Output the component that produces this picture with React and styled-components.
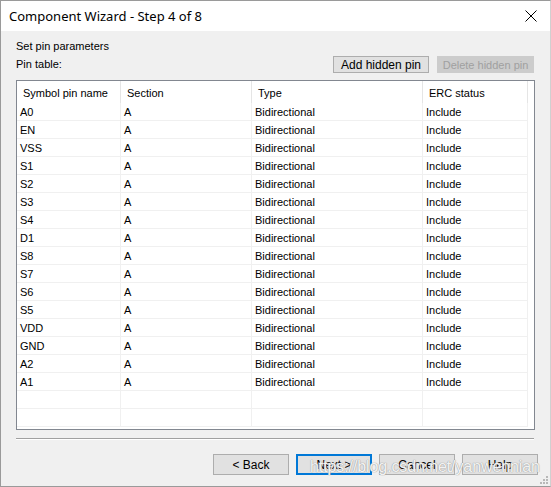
import React from 'react';
import styled, { createGlobalStyle } from 'styled-components';

const GlobalStyle = createGlobalStyle`
  html, body {
    margin: 0;
    padding: 0;
    background: #ffffff;
  }
  * {
    box-sizing: border-box;
  }
`;

const pins = ['A0', 'EN', 'VSS', 'S1', 'S2', 'S3', 'S4', 'D1', 'S8', 'S7', 'S6', 'S5', 'VDD', 'GND', 'A2', 'A1'];

const columns = [
  { label: 'Symbol pin name', width: 104 },
  { label: 'Section', width: 131 },
  { label: 'Type', width: 171 },
  { label: 'ERC status', width: 105 },
];

const Window = styled.div`
  position: relative;
  width: 551px;
  height: 487px;
  display: flex;
  flex-direction: column;
  border: 1px solid #9a9a9a;
  border-right-color: #d0d0d0;
  background: #f0f0f0;
  font-family: "Liberation Sans", Arial, sans-serif;
  font-size: 11px;
  color: #000;
  overflow: hidden;
`;

const TitleBar = styled.div`
  height: 30px;
  flex: none;
  display: flex;
  align-items: center;
  justify-content: space-between;
  padding: 0 13px 0 8px;
  background: #ffffff;
  font-family: "Noto Sans", "Open Sans", sans-serif;
  font-size: 13px;
`;

const Body = styled.div`
  flex: 1;
  display: flex;
  flex-direction: column;
  padding: 9px 15px 0 15px;
`;

const Label = styled.div`
  height: 13px;
  line-height: 13px;
`;

const ToolRow = styled.div`
  display: flex;
  align-items: center;
  justify-content: space-between;
  margin-top: 3px;
  padding-right: 1px;
`;

const ButtonGroup = styled.div`
  display: flex;
  gap: ${p => p.gap || 8}px;
`;

const Button = styled.button`
  width: ${p => p.w || 76}px;
  height: ${p => p.h || 21}px;
  padding: 0;
  border: ${p => p.focused ? '2px' : '1px'} solid;
  color: ${p => p.disabled ? '#a0a0a0' : '#000'};
  border-color: ${p => p.disabled ? '#cccccc' : p.focused ? '#0078d7' : '#adadad'};
  background: ${p => p.disabled ? '#cccccc' : '#e1e1e1'};
  font-family: "Liberation Sans", Arial, sans-serif;
  font-size: ${p => p.fs || 11}px;
  white-space: nowrap;
  cursor: default;
`;

const Table = styled.div`
  margin-top: 7px;
  height: 350px;
  border: 1px solid #828790;
  background: #ffffff;
  overflow: hidden;
`;

const Row = styled.div`
  display: flex;
  height: ${p => p.header ? 22 : 18}px;
  border-bottom: ${p => p.header ? 'none' : '1px solid #f0f0f0'};
  width: 511px;
`;

const Cell = styled.div`
  width: ${p => p.w}px;
  flex: none;
  display: flex;
  align-items: center;
  padding-left: ${p => p.header ? 6 : 3}px;
  padding-top: ${p => p.header ? 1 : 0}px;
  border-right: 1px solid ${p => p.header ? '#e5e5e5' : '#f0f0f0'};
  white-space: nowrap;
  overflow: hidden;
`;

const Divider = styled.div`
  margin-top: 8px;
  height: 2px;
  border-top: 1px solid #a0a0a0;
  border-bottom: 1px solid #ffffff;
  margin-right: 1px;
`;

const Footer = styled.div`
  display: flex;
  justify-content: flex-end;
  margin-top: 14px;
  margin-right: -3px;
`;

const Watermark = styled.div`
  position: absolute;
  left: 309px;
  top: 457px;
  font-family: "Liberation Sans", Arial, sans-serif;
  font-size: 16px;
  letter-spacing: -0.1px;
  color: rgba(255, 255, 255, 0.9);
  text-shadow: 0 0 1px #9a9a9a, 0 0 1px #9a9a9a;
  white-space: nowrap;
  pointer-events: none;
`;

const Grip = styled.svg`
  position: absolute;
  right: 1px;
  bottom: 1px;
`;

const CloseIcon = () => (
  <svg width="12" height="12" viewBox="0 0 12 12">
    <path d="M0.5 0.5 L11.5 11.5 M11.5 0.5 L0.5 11.5" stroke="#000" strokeWidth="1" fill="none" />
  </svg>
);

export default function App() {
  const rows = [...pins, '', ''];
  return (
    <>
      <GlobalStyle />
      <Window>
        <TitleBar>
          <span>Component Wizard - Step 4 of 8</span>
          <CloseIcon />
        </TitleBar>
        <Body>
          <Label>Set pin parameters</Label>
          <ToolRow>
            <Label>Pin table:</Label>
            <ButtonGroup gap={8}>
              <Button w={96} h={17} fs={12}>Add hidden pin</Button>
              <Button w={97} h={17} fs={11} disabled>Delete hidden pin</Button>
            </ButtonGroup>
          </ToolRow>
          <Table>
            <Row header>
              {columns.map(c => (
                <Cell header key={c.label} w={c.width}>{c.label}</Cell>
              ))}
            </Row>
            {rows.map((pin, i) => (
              <Row key={i}>
                <Cell w={columns[0].width}>{pin}</Cell>
                <Cell w={columns[1].width}>{pin ? 'A' : ''}</Cell>
                <Cell w={columns[2].width}>{pin ? 'Bidirectional' : ''}</Cell>
                <Cell w={columns[3].width}>{pin ? 'Include' : ''}</Cell>
              </Row>
            ))}
          </Table>
          <Divider />
          <Footer>
            <ButtonGroup gap={7}>
              <Button fs={12}>&lt; Back</Button>
              <Button fs={12} focused>Next &gt;</Button>
              <Button fs={12}>Cancel</Button>
              <Button fs={12}>Help</Button>
            </ButtonGroup>
          </Footer>
        </Body>
        <Watermark>https://blog.csdn.net/yanwennian</Watermark>
        <Grip width="10" height="10" viewBox="0 0 10 10">
          <rect x="7" y="1" width="2" height="2" fill="#b8b8b8" />
          <rect x="4" y="4" width="2" height="2" fill="#b8b8b8" />
          <rect x="7" y="4" width="2" height="2" fill="#b8b8b8" />
          <rect x="1" y="7" width="2" height="2" fill="#b8b8b8" />
          <rect x="4" y="7" width="2" height="2" fill="#b8b8b8" />
          <rect x="7" y="7" width="2" height="2" fill="#b8b8b8" />
        </Grip>
      </Window>
    </>
  );
}
